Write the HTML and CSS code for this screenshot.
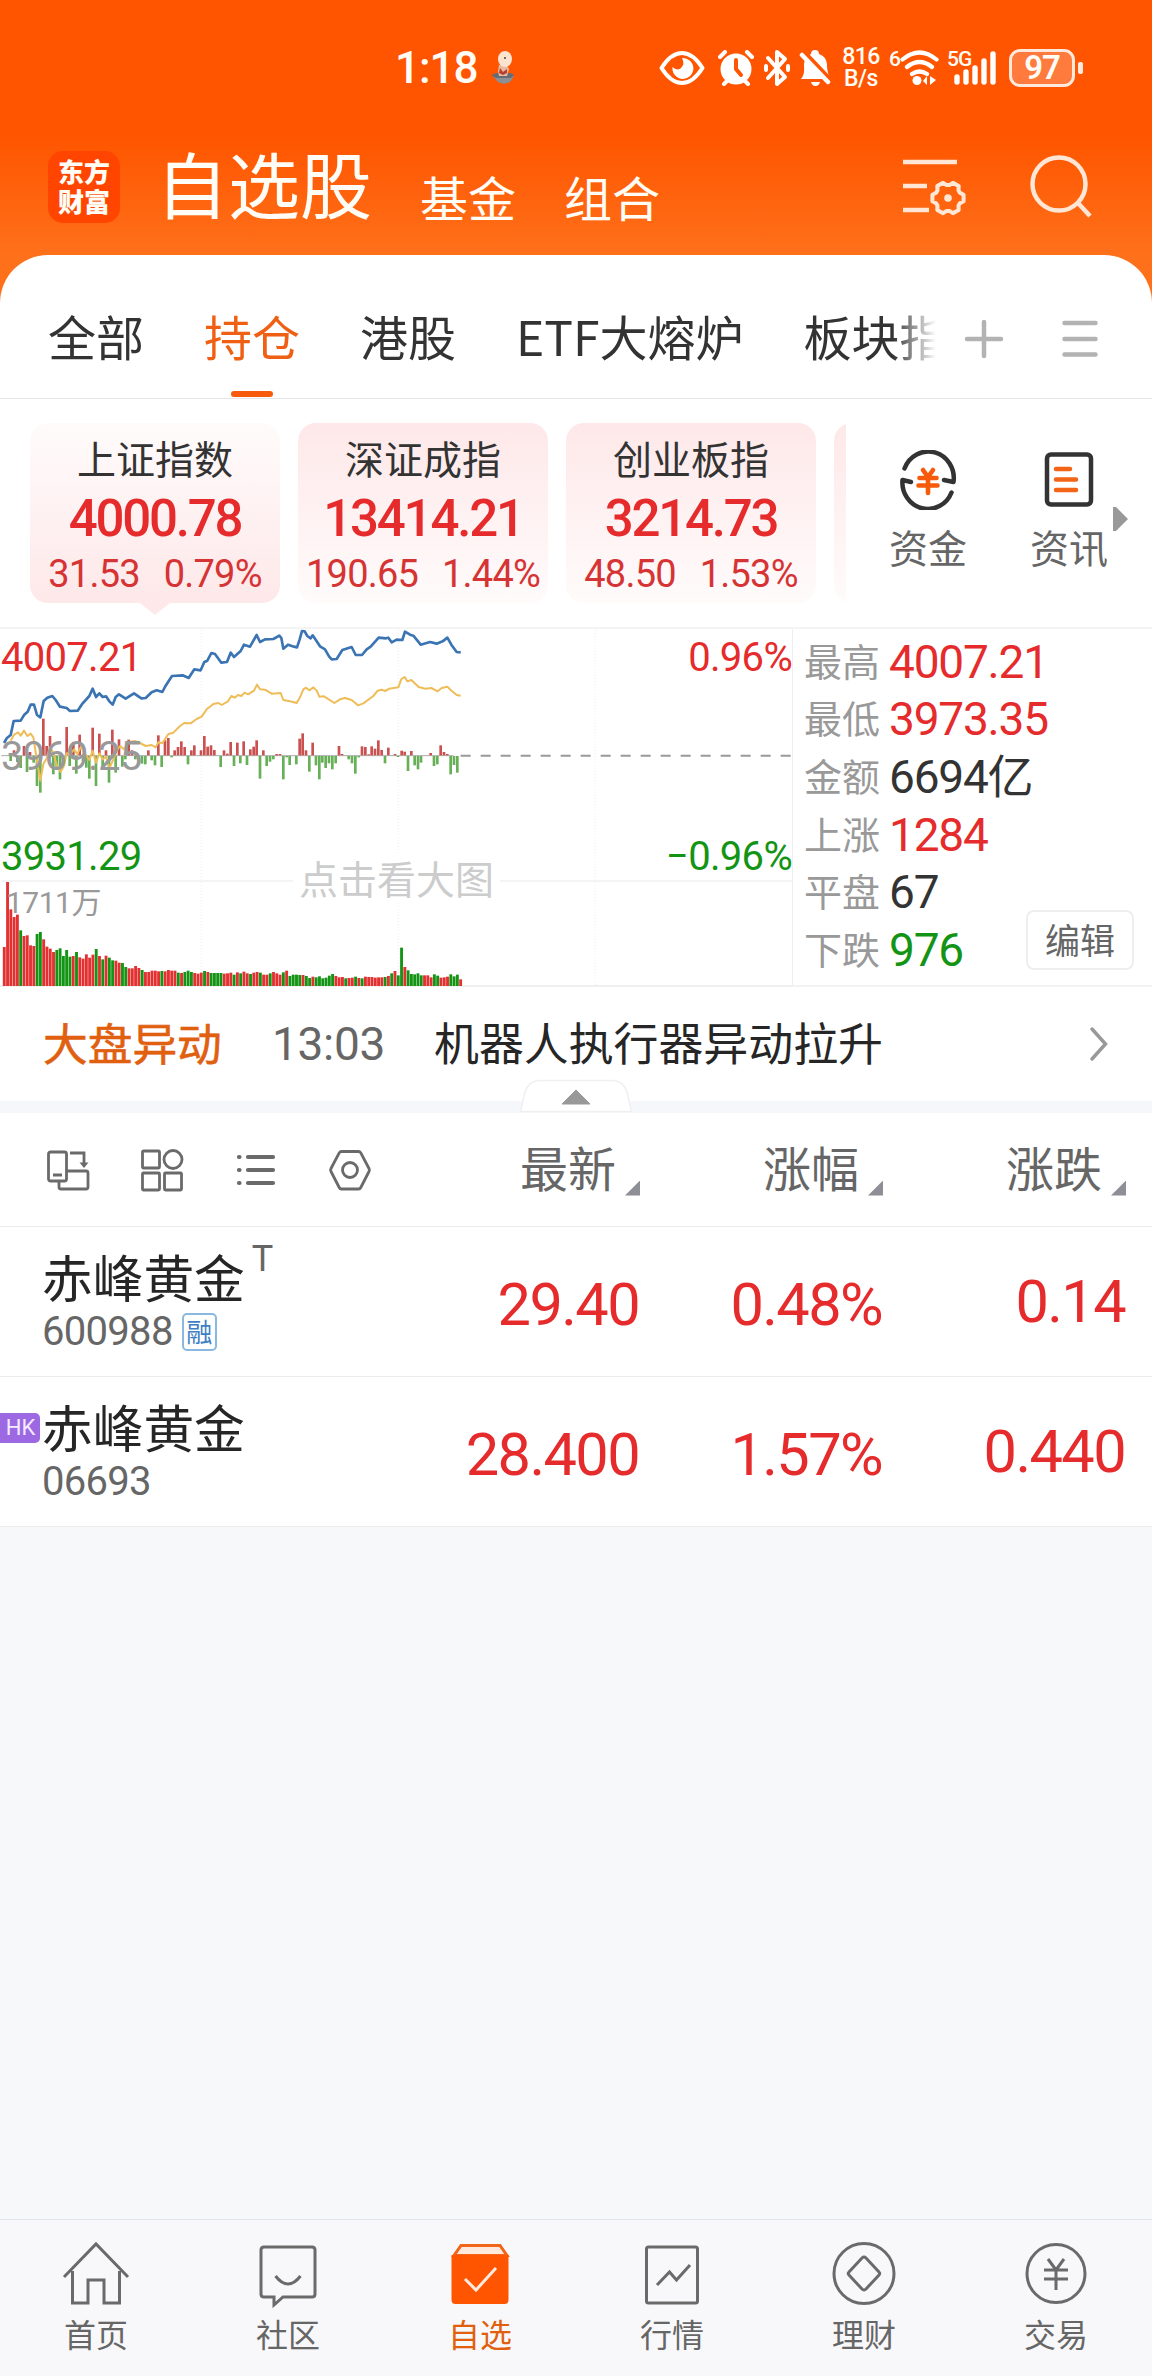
FILE: index.html
```html
<!DOCTYPE html>
<html lang="zh-CN">
<head>
<meta charset="utf-8">
<title>自选股</title>
<link rel="stylesheet" href="styles.css">
</head>
<body>
<header class="top">
  <div class="status">
    <span class="clock">1:18</span>
    <svg class="s-toon" width="26" height="34" viewBox="0 0 26 34"><path d="M3 25h21l-4 6-6 2-6-2z" fill="#8b8f96"/><path d="M1 24l6-2h14l3 2-3 3H6z" fill="#666c74"/><path d="M9 14l7-1 3 5-2 7H9l-1-5z" fill="#e8b9a0"/><path d="M10 17l3 4 4-3v4l-4 2-4-2z" fill="#b5402f"/><ellipse cx="15" cy="8" rx="7" ry="8" fill="#fbe3cd"/><circle cx="15" cy="7" r="1" fill="#443"/></svg>
    <svg class="s-eye" width="46" height="34" viewBox="0 0 46 34"><path d="M2.500 17Q12 2 23 2t20.500 15Q34 32 23 32T2.500 17z" fill="none" stroke="#fff" stroke-width="4" stroke-linejoin="round"/><path d="M23 7a10.500 10.500 0 1 1-9.500 9q4 4 8 1.500 5-4 1.500-10.500z" fill="#fff"/></svg>
    <svg class="s-alarm" width="36" height="36" viewBox="0 0 36 36"><circle cx="18" cy="19" r="15.500" fill="#fff"/><path d="M2 7l5-5M34 7l-5-5M6 34l4-4M30 34l-4-4" stroke="#fff" stroke-width="4" stroke-linecap="round"/><path d="M18 10v9l5 6" fill="none" stroke="#f50" stroke-width="4" stroke-linecap="round"/></svg>
    <svg class="s-bt" width="26" height="38" viewBox="0 0 26 38"><path d="M4 9l17 19-8 7V3l8 7L4 29" fill="none" stroke="#fff" stroke-width="4" stroke-linejoin="round" stroke-linecap="round"/><path d="M2 17v4M24 17v4" stroke="#fff" stroke-width="4" stroke-linecap="round"/></svg>
    <svg class="s-bell" width="32" height="36" viewBox="0 0 32 36"><path d="M2 29c4-5 3-9 3-14a11 11 0 0 1 7-11 4 4 0 0 1 8 0c6 2 8 7 8 11 0 5 1 9 3 14z" fill="#fff"/><path d="M12 32h9q-1 4-4.500 4T12 32z" fill="#fff"/><path d="M0 -3l33 35" stroke="#f50" stroke-width="5"/><path d="M3 5l26 27" stroke="#fff" stroke-width="4.500" stroke-linecap="round"/></svg>
    <span class="speed">816<br>B/s</span>
    <span class="sup six">6</span>
    <svg class="s-wifi" width="40" height="36" viewBox="0 0 40 36"><path d="M2.500 9.500q17-14 34 0M7 17q12.500-10 25 0M12 24q7.500-5 15 0" fill="none" stroke="#fff" stroke-width="4.200" stroke-linecap="round"/><circle cx="17" cy="30.500" r="4.500" fill="#fff"/><path d="M27 26v9l-4-4zM30 26v9l6-5z" fill="#fff"/></svg>
    <span class="sup five">5G</span>
    <svg class="s-bars" width="45" height="36" viewBox="0 0 45 36"><path d="M4 27v5M13 22v10M22 18v14M31 11v21M40 4v28" stroke="#fff" stroke-width="5.400" stroke-linecap="round"/></svg>
    <span class="battery">97</span><i class="nub"></i>
  </div>
  <div class="titlebar">
    <div class="logo"><span>东方</span><span>财富</span></div>
    <h1>自选股</h1>
    <span class="sub">基金</span>
    <span class="sub second">组合</span>
    <svg class="i-conf" width="64" height="58" viewBox="0 0 64 58" fill="none" stroke="#ffe6d5" stroke-width="4.500"><path d="M0 4h54M0 28h24M0 52h26"/><path transform="translate(45 40)" stroke-width="4" stroke-linejoin="round" d="M15.600 3.300L11.900 5.300 10.500 7.600 10.700 11.900 4.900 15.200 1.400 12.900-1.400 12.900-4.900 15.200-10.700 11.900-10.500 7.600-11.900 5.300-15.600 3.300V-3.300L-11.900-5.300-10.500-7.600-10.700-11.900-4.900-15.200-1.400-12.900 1.400-12.900 4.900-15.200 10.700-11.900 10.500-7.600 11.900-5.300 15.600-3.300z"/><circle cx="45" cy="40" r="3.800" fill="#ffe6d5" stroke="none"/></svg>
    <svg class="i-find" width="64" height="64" viewBox="0 0 64 64" fill="none" stroke="#ffe6d5" stroke-width="4.500"><circle cx="29" cy="29" r="26.500"/><path d="M48 48l12 13"/></svg>
  </div>
</header>

<main class="sheet">
  <nav class="tabs">
    <div class="tablist"><span>全部</span><span class="on">持仓</span><span>港股</span><span>ETF大熔炉</span><span>板块指数</span></div>
    <svg width="40" height="40" viewBox="0 0 40 40" stroke="#b3b3b3" stroke-width="4.500" stroke-linecap="round"><path d="M3 20h34M20 3v34"/></svg>
    <svg class="i-menu" width="36" height="38" viewBox="0 0 36 38" stroke="#b3b3b3" stroke-width="4.500" stroke-linecap="round"><path d="M2.500 3h31M2.500 19h31M2.500 34.500h31"/></svg>
  </nav>

  <section class="indices">
    <div class="cards">
      <div class="card sel"><b>上证指数</b><strong>4000.78</strong><p><span>31.53</span><span>0.79%</span></p></div>
      <div class="card"><b>深证成指</b><strong>13414.21</strong><p><span>190.65</span><span>1.44%</span></p></div>
      <div class="card"><b>创业板指</b><strong>3214.73</strong><p><span>48.50</span><span>1.53%</span></p></div>
      <div class="card"></div>
    </div>
    <div class="quick">
      <svg width="60" height="60" viewBox="0 0 60 60" fill="none" stroke-width="4.500" stroke-linejoin="round" stroke-linecap="round"><path d="M6.500 18.500A25.500 26.500 0 0 1 55.500 32L46 30M53.500 42.500A25.500 26.500 0 0 1 4.500 30L13 32" stroke="#333"/><path d="M25 20l5 7 5-7M21.500 28h17M20.500 35.500h19M30 28v15" stroke="#f85a0b" stroke-width="4.600"/></svg>
      <span>资金</span>
    </div>
    <div class="quick news">
      <svg width="60" height="60" viewBox="0 0 60 60" fill="none" stroke-width="4.500"><rect x="8" y="4.500" width="44" height="50" rx="4" stroke="#333"/><path d="M17 19h14M17 29.500h20M17 40h20" stroke="#f26417" stroke-linecap="round"/></svg>
      <span>资讯</span>
    </div>
    <i class="more"></i>
  </section>

  <section class="market">
    <div class="chart">
      <svg id="plot" width="792" height="359" viewBox="0 24 2376 1077" fill="none">
        <path d="M604 30V1098M1195 30V1098M1786 30V1098" stroke="#eee" stroke-width="3" stroke-dasharray="3 6"/>
        <path d="M4 783H2376" stroke="#f0f0f0" stroke-width="5"/>
        <path d="M4 407H1360" stroke="#aaa" stroke-width="3"/>
        <path d="M1382 407H2376" stroke="#999" stroke-width="6" stroke-dasharray="30 30"/>
        <g id="flow"></g>
        <path d="M32 362L42 344 54 337 62 347 72 332 82 348 92 341 100 352 106 390 112 430 121 482 130 432 140 415 150 383 160 398 170 435 182 455 192 437 200 400 212 402 222 388 232 402 243 380 255 402 268 420 278 392 288 428 298 400 308 418 318 410 328 445 340 418 350 392 360 378 372 388 385 366 405 363 420 369 437 378 455 375 467 382 476 366 487 370 505 342 520 338 540 318 553 309 572 310 590 297 605 290 620 268 640 252 655 249 665 255 684 244 694 228 704 233 714 225 724 228 734 218 744 223 762 212 771 194 780 208 795 209 815 221 842 219 850 240 870 244 890 249 900 232 910 208 918 203 928 211 940 202 950 212 958 230 972 229 1003 249 1020 238 1035 234 1055 240 1074 256 1090 250 1120 228 1133 212 1145 209 1155 213 1168 206 1195 202 1204 177 1214 171 1222 184 1234 180 1256 201 1276 206 1294 204 1313 214 1325 204 1342 200 1352 210 1370 225 1382 227" stroke="#efbd58" stroke-width="6" stroke-linejoin="round"/>
        <path d="M12 369L20 355 32 345 41 303 62 302 73 284 83 275 92 254 102 254 111 285 121 292 131 243 142 233 157 228 167 240 180 260 200 264 210 273 233 272 248 250 268 228 278 206 288 231 298 220 308 231 318 229 328 244 338 254 347 231 357 223 377 236 402 220 424 235 437 234 455 217 470 211 487 216 497 197 516 168 548 166 566 174 583 148 602 151 613 126 622 122 634 99 645 102 664 128 681 126 692 98 702 111 722 93 732 74 750 80 770 45 780 66 795 58 820 57 838 47 844 54 850 86 864 74 882 80 891 82 899 58 906 33 914 34 922 48 932 55 938 46 960 79 975 88 987 109 995 118 1010 117 1027 90 1055 81 1067 105 1086 105 1100 88 1112 80 1136 53 1158 55 1165 53 1175 67 1190 59 1207 60 1215 35 1230 44 1240 47 1262 74 1290 66 1310 71 1328 64 1342 53 1354 74 1370 96 1382 97" stroke="#3b74b2" stroke-width="8" stroke-linejoin="round"/>
        <g id="volume"></g>
        <path d="M1386 1098H2376" stroke="#eee" stroke-width="5"/>
      </svg>
      <span class="tag red hi">4007.21</span><span class="tag red hi r">0.96%</span>
      <span class="tag gray mid">3969.25</span>
      <span class="tag green lo">3931.29</span><span class="tag green lo r">−0.96%</span>
      <span class="vol">1711万</span><span class="tip">点击看大图</span>
    </div>
    <dl class="stats">
      <div><dt>最高</dt><dd class="red">4007.21</dd></div>
      <div><dt>最低</dt><dd class="red">3973.35</dd></div>
      <div><dt>金额</dt><dd>6694亿</dd></div>
      <div><dt>上涨</dt><dd class="red">1284</dd></div>
      <div><dt>平盘</dt><dd>67</dd></div>
      <div><dt>下跌</dt><dd class="green">976</dd></div>
      <button class="edit">编辑</button>
    </dl>
  </section>

  <section class="flash">
    <b>大盘异动</b><time>13:03</time><span>机器人执行器异动拉升</span>
    <svg width="20" height="36" viewBox="0 0 20 36" fill="none" stroke="#999" stroke-width="3.500" stroke-linecap="round"><path d="M3 3l13.500 15L3 33"/></svg>
  </section>
  <div class="strip"><svg width="114" height="34" viewBox="0 0 114 34"><path d="M1.500 32.500L6 13Q10 1.500 20 1.500H94q10 0 14 11.500l4.500 19.500z" fill="#fff" stroke="#f0f0f2" stroke-width="1.500"/><path d="M43 25L57 11 71 25z" fill="#999" stroke="#999" stroke-linejoin="round"/></svg></div>

  <section class="table">
    <div class="row head">
      <div class="tools">
        <svg width="44" height="44" viewBox="0 0 44 44" fill="none" stroke="#6a6a6a" stroke-width="2.800"><rect x="2.500" y="4" width="18" height="29" rx="2"/><path d="M7 27h9M24 5h14v13M13 34v5q0 2 2 2h25q2 0 2-2V25q0-2-2-2H21"/><path d="M33.500 14.500h9L38 20z" fill="#6a6a6a" stroke="none"/></svg>
        <svg width="44" height="44" viewBox="0 0 44 44" fill="none" stroke="#6a6a6a" stroke-width="2.800"><rect x="2.500" y="3" width="17" height="17" rx="1"/><circle cx="33" cy="11.500" r="9"/><rect x="2.500" y="25" width="17" height="17" rx="1"/><rect x="24.500" y="25" width="17" height="17" rx="1"/></svg>
        <svg width="44" height="44" viewBox="0 0 44 44" fill="none" stroke="#6a6a6a" stroke-width="4.200" stroke-linecap="round"><path d="M14 9h25M14 22h25M14 35h25M5 9h.5M5 22h.5M5 35h.5"/></svg>
        <svg width="44" height="44" viewBox="0 0 44 44" fill="none" stroke="#6a6a6a" stroke-width="2.800" stroke-linejoin="round"><path d="M13.500 3.500h17q1.500 0 2.300 1.400L41 20.500q.8 1.500 0 3L32.800 39.500q-.8 1.500-2.300 1.500h-17q-1.500 0-2.300-1.500L3 23.500q-.8-1.500 0-3L11.200 4.900q.8-1.400 2.300-1.400z"/><circle cx="22" cy="22" r="7.500"/></svg>
      </div>
      <span>最新<i></i></span><span>涨幅<i></i></span><span>涨跌<i></i></span>
    </div>
    <div class="row">
      <div class="stock"><h2>赤峰黄金<sup>T</sup></h2><p>600988<em>融</em></p></div>
      <span>29.40</span><span>0.48%</span><span class="chg">0.14</span>
    </div>
    <div class="row">
      <div class="stock"><u>HK</u><h2>赤峰黄金</h2><p>06693</p></div>
      <span>28.400</span><span>1.57%</span><span class="chg">0.440</span>
    </div>
  </section>
</main>

<footer class="dock">
  <a><svg width="70" height="70" viewBox="0 0 70 70"><path d="M3 37L35 4l32 33M11.500 31v32H27V40h16v23h15.500V31"/></svg>首页</a>
  <a><svg width="70" height="70" viewBox="0 0 70 70"><path d="M11 7h48q3 0 3 3v44q0 3-3 3H30l-9 8v-8H11q-3 0-3-3V10q0-3 3-3z"/><path d="M22.500 36q12.500 16 25 0"/></svg>社区</a>
  <a class="on"><svg width="70" height="70" viewBox="0 0 70 70"><path d="M16 5.500h39l7 10H9z" fill="#ffe9dc" stroke="#f26417"/><path d="M6.500 15h57v45q0 4-4 4h-49q-4 0-4-4z" fill="#f50" stroke="none"/><path d="M20 39l11 11 20-22" stroke="#ffe9dc"/></svg>自选</a>
  <a><svg width="70" height="70" viewBox="0 0 70 70"><rect x="9.500" y="7" width="51" height="56" rx="2"/><path d="M20 45l12.500-13 7 8L53 25"/></svg>行情</a>
  <a><svg width="70" height="70" viewBox="0 0 70 70"><circle cx="35" cy="33.500" r="30"/><path d="M33 18q2-2 4 0l13 14q1.500 1.500 0 3L37 49q-2 2-4 0L20 35q-1.500-1.500 0-3z"/></svg>理财</a>
  <a><svg width="70" height="70" viewBox="0 0 70 70"><circle cx="35" cy="33.500" r="29"/><path d="M27 19l8 11 8-11M23 30h24M23 39h24M35 30v20"/></svg>交易</a>
</footer>
<script src="chart.js"></script>
</body>
</html>
```
FILE: styles.css
```css
* { box-sizing: border-box; margin: 0; padding: 0; }
body {
  width: 1152px; min-height: 2376px; display: flex; flex-direction: column;
  background: #f7f8fa; color: #333;
  font-family: "Noto Sans CJK SC", sans-serif; overflow-x: hidden;
}
svg { display: block; flex: none; }
i, em, u { font-style: normal; text-decoration: none; }
.red { color: #e52b2b; }
.green { color: #149414; }
.gray { color: #999; }

.top { height: 303px; background: linear-gradient(#ff5500 0, #ff5500 135px, #ff701a 255px); color: #fffdf5; }
.status { height: 136px; padding-left: 395px; display: flex; align-items: center; font-family: Roboto, sans-serif; }
.clock { width: 95px; font-size: 44px; font-weight: 500; letter-spacing: -1px; }
.s-toon { margin-right: 143px; }
.s-alarm { margin-left: 13px; }
.s-bt { margin-left: 10px; }
.s-bell { margin-left: 9px; margin-right: 1px; }
.speed { width: 38px; margin-left: 10px; font-size: 23px; line-height: 22px; text-align: center; font-weight: 500; letter-spacing: -.5px; }
.sup { font-size: 21px; line-height: 20px; font-weight: 500; letter-spacing: -1px; align-self: flex-start; margin-top: 49px; }
.six { width: 11px; margin-left: 9px; }
.five { width: 26px; margin-left: 7px; }
.s-bars { margin-left: -20px; }
.battery { width: 66px; height: 38px; margin-left: 11px; border: 3px solid #ffe9dc; border-radius: 11px; background: #ff7a3d; font-size: 33px; line-height: 32px; font-weight: 600; text-align: center; letter-spacing: -1px; }
.nub { width: 5px; height: 12px; margin-left: 3px; border-radius: 2px; background: #ffe9dc; }

.titlebar { height: 100px; padding-left: 48px; display: flex; align-items: center; margin-top: 1px; }
.logo { width: 72px; height: 72px; border-radius: 15px; background: #ff4500; display: flex; flex-direction: column; align-items: center; justify-content: center; padding-bottom: 2px; font: 900 26px/30px "Noto Sans CJK SC", sans-serif; }
.logo span { height: 30px; }
h1 { margin-left: 36px; font-size: 72px; line-height: 100px; font-weight: 400; width: 264px; padding-bottom: 11px; }
.sub { font-size: 48px; line-height: 100px; padding-top: 18px; width: 144px; }
.sub.second { width: 339px; }
.i-find { margin-left: 63px; }

.sheet { margin-top: -48px; background: #fff; border-radius: 48px 48px 0 0; }
.tabs { height: 144px; border-bottom: 1px solid #e6e6e6; display: flex; align-items: center; padding: 24px 0 0 48px; }
.tablist { width: 888px; height: 119px; display: flex; gap: 60px; overflow: hidden; white-space: nowrap; font-size: 48px; line-height: 113px; -webkit-mask-image: linear-gradient(90deg, #000 845px, transparent 888px); mask-image: linear-gradient(90deg, #000 845px, transparent 888px); margin-right: 28px; }
.tablist .on { color: #f06014; display: flex; flex-direction: column; align-items: center; }
.tablist .on::after { content: ""; width: 42px; height: 6px; margin-top: -1px; border-radius: 3px; background: #f85a0b; }
.i-menu { margin-left: 58px; }

.indices { height: 228px; padding: 24px 0 0 30px; display: flex; }
.cards { width: 816px; height: 204px; display: flex; gap: 18px; overflow: hidden; }
.card { flex: none; width: 250px; height: 180px; border-radius: 18px; background: linear-gradient(#fee8e9, #fffbfb); text-align: center; position: relative; }
.card.sel { background: linear-gradient(#fffbfb, #fee8e9); }
.card.sel::after { content: ""; position: absolute; left: 110px; top: 180px; border: 15px solid transparent; border-top: 12px solid #fee8e9; border-bottom: 0; }
.card b { display: block; font-size: 39px; line-height: 56px; padding-top: 6px; font-weight: 400; height: 67px; }
.card strong { display: block; font: 500 51px/58px Roboto, sans-serif; letter-spacing: -2.200px; color: #e52b2b; height: 56px; }
.card p { display: flex; justify-content: center; gap: 24px; font: 400 38px/56px Roboto, sans-serif; letter-spacing: -.8px; color: #d63434; white-space: nowrap; }
.quick { width: 76px; margin-left: 44px; padding-top: 27px; display: flex; flex-direction: column; align-items: center; font-size: 39px; line-height: 56px; color: #666; white-space: nowrap; }
.quick span { margin-top: 8px; }
.quick.news { margin-left: 65px; }
.more { margin: 84px 0 0 6px; width: 15px; height: 24px; background: #999; clip-path: polygon(0 0, 20% 0, 100% 50%, 20% 100%, 0 100%); }

.market { height: 360px; display: flex; border-top: 2px solid #f4f4f4; border-bottom: 2px solid #f2f2f2; }
.chart { width: 793px; border-right: 1px solid #eee; position: relative; font-family: Roboto, "Noto Sans CJK SC", sans-serif; }
#plot { margin-top: -1px; }
.tag { position: absolute; left: 1px; font-size: 40px; line-height: 40px; letter-spacing: -.7px; }
.tag.r { left: auto; right: 0; }
.hi { top: 9px; }
.mid { top: 108px; }
.lo { top: 208px; }
.vol { position: absolute; left: 6px; top: 254px; font-size: 30px; line-height: 40px; letter-spacing: -.5px; color: #999; }
.tip { position: absolute; left: 293px; top: 224px; padding: 0 6px; font: 39px/48px "Noto Sans CJK SC", sans-serif; color: #ccc; background: #fff; }
.stats { position: relative; flex: 1; padding: 4px 0 0 11px; }
.stats div { display: flex; height: 57.600px; align-items: center; }
dt { width: 85px; font-size: 38px; line-height: 56px; color: #999; padding-bottom: 4px; }
dd { font: 400 46px/56px Roboto, "Noto Sans CJK SC", sans-serif; letter-spacing: -1.200px; }
.edit { position: absolute; right: 18px; bottom: 15px; width: 108px; height: 60px; border: 2px solid #eee; border-radius: 8px; background: #fff; font: 35px/50px "Noto Sans CJK SC", sans-serif; color: #666; padding-bottom: 3px; }

.flash { height: 114px; padding-left: 43px; display: flex; align-items: center; font-size: 44.700px; color: #262626; }
.flash b { width: 229px; font-weight: 400; -webkit-text-stroke: .6px #e06010; color: #e06010; padding-bottom: 6px; }
.flash time { width: 162px; font: 400 46px Roboto, sans-serif; color: #666; letter-spacing: -.3px; }
.flash span { width: 655px; padding-bottom: 6px; font-size: 44.900px; }
.strip { height: 12px; background: #f6f7fa; display: flex; justify-content: center; align-items: flex-end; }

.row { height: 150px; border-bottom: 1px solid #ebebeb; display: grid; grid-template-columns: 400px repeat(3, 243px); align-items: center; }
.row > span { text-align: right; font: 400 59.500px/80px Roboto, sans-serif; letter-spacing: -1.600px; color: #e52b2b; padding: 6px 4px 0 0; }
.row .chg { padding-top: 1px; }
.row.head { height: 114px; }
.row.head > span { display: flex; justify-content: flex-end; align-items: center; font: 48px/72px "Noto Sans CJK SC", sans-serif; letter-spacing: 0; color: #666; padding: 0 3px 8px 0; }
.row.head i { width: 15px; height: 15px; margin: 45px 0 0 9px; background: #8e8e96; clip-path: polygon(100% 0, 100% 100%, 0 100%); }
.tools { display: flex; gap: 50px; padding-left: 46px; }
.stock { position: relative; padding-left: 42px; }
h2 { display: flex; height: 60px; font-size: 50.700px; line-height: 54px; font-weight: 400; color: #262626; }
sup { font: 36px/36px Roboto, sans-serif; color: #666; margin: -8px 0 0 7px; }
.stock p { display: flex; align-items: center; font: 400 40px/46px Roboto, sans-serif; letter-spacing: -.7px; color: #666; }
em { width: 35px; height: 38px; margin-left: 9px; border: 2px solid #8ab8de; border-radius: 5px; color: #3d7fc4; font: 26px/32px "Noto Sans CJK SC", sans-serif; text-align: center; letter-spacing: 0; }
u { position: absolute; left: 0; top: 14px; width: 40px; height: 30px; background: #9c69e2; border-radius: 0 5px 5px 0; color: #f5eaff; font: 22px/30px Roboto, sans-serif; text-align: center; padding-left: 1px; }

.dock { margin-top: auto; height: 157px; background: #f8f8fa; border-top: 1px solid #e2e4e7; display: grid; grid-template-columns: repeat(6, 1fr); padding-top: 20px; }
.dock a { display: flex; flex-direction: column; align-items: center; font-size: 32px; line-height: 46px; color: #666; }
.dock svg { fill: none; stroke: #6a6a6a; stroke-width: 3; }
.dock .on { color: #e06010; }
```
FILE: chart.js
```js
// Draws one minute bars; each value is [centre x, signed height] or a colour-coded height.
const NS = "http://www.w3.org/2000/svg";
function bar(group, x, y, h, w, fill) {
  const r = document.createElementNS(NS, "rect");
  r.setAttribute("x", x);
  r.setAttribute("y", y);
  r.setAttribute("width", w);
  r.setAttribute("height", h);
  r.setAttribute("fill", fill);
  group.appendChild(r);
}

const up = "42,15 72,28 90,10 130,110 140,28 150,58 200,85 210,20 220,40 239,62 278,83 298,65 318,15 337,77 357,48 386,47 396,15 445,15 475,60 495,45 505,52 524,15 534,25 544,42 554,25 574,15 583,30 603,15 613,58 623,26 633,30 643,16 672,15 682,5 692,40 712,38 731,42 751,18 761,26 770,45 790,15 830,4 840,4 899,50 908,66 918,15 938,38 1017,28 1026,4 1086,27 1096,25 1106,3 1115,27 1125,20 1135,45 1145,16 1165,23 1185,4 1205,14 1214,11 1234,13 1292,7 1322,30 1332,10 1342,4";
const down = "32,15 52,18 62,36 81,48 101,20 111,90 121,110 160,55 170,40 180,70 190,30 209,30 229,53 249,15 259,35 268,68 288,90 308,40 327,80 347,50 367,32 376,10 406,10 416,15 426,23 436,25 455,13 465,28 485,33 515,4 564,25 662,33 702,30 721,22 741,27 780,68 800,30 810,17 820,10 850,70 860,4 869,27 889,25 928,47 948,28 958,70 967,20 977,36 987,22 997,40 1007,22 1046,10 1056,22 1066,53 1076,4 1155,22 1194,3 1224,45 1244,28 1254,40 1263,20 1302,30 1312,25 1352,55 1362,27 1372,50";
const flow = document.getElementById("flow");
for (const p of up.split(" ")) {
  const [x, h] = p.split(",").map(Number);
  bar(flow, x - 4, 406 - h, h, 8, "#cb5050");
}
for (const p of down.split(" ")) {
  const [x, h] = p.split(",").map(Number);
  bar(flow, x - 4, 408, h, 8, "#68b058");
}

const volumes = "r117 r312 r230 r207 r214 g167 r150 r152 r122 r120 g156 g162 r140 r118 r112 r102 g108 g113 g90 g108 g88 r90 g102 r86 r82 r95 r85 r94 g111 r90 g80 r91 g85 g77 r76 r70 g69 g57 r53 r53 r60 r54 g48 r42 r42 r46 r46 r44 g45 r44 r48 r46 r46 g40 r39 g42 g46 g42 r39 r37 r40 g45 r42 g39 g39 g39 g39 r37 r38 r40 g34 r41 g38 r43 r38 g36 r40 r42 g40 r34 r34 g38 r42 r38 r34 g41 r46 g30 g34 g34 g33 r33 g30 g24 r28 g26 g29 g23 g25 g31 g36 r30 r26 r27 g23 r24 r25 g28 r24 g23 r28 r27 r27 r25 r26 r26 g27 r30 g38 r45 g32 g115 r57 g47 g36 g35 g38 g32 r32 r32 r26 g35 g31 r25 r26 r28 g35 g29 g34 r20";
const volume = document.getElementById("volume");
volumes.split(" ").forEach((v, i) => {
  const h = Number(v.slice(1));
  bar(volume, 8.5 + i * 9.85, 1098 - h, h, 8.6, v[0] === "r" ? "#e33030" : "#149414");
});
```
